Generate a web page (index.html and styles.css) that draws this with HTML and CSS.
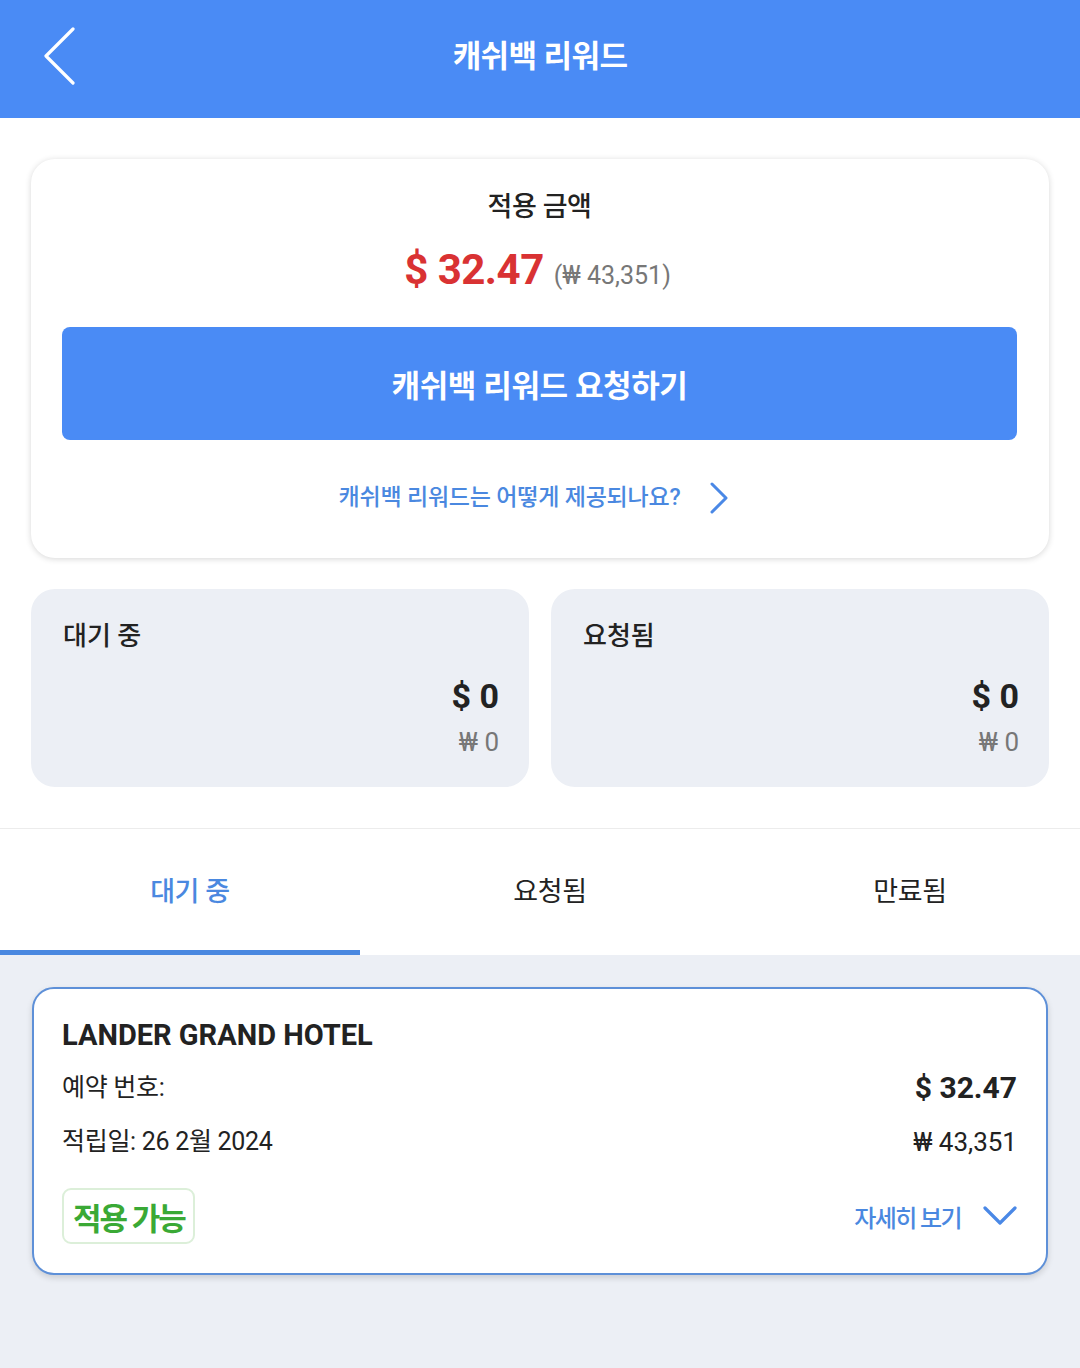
FILE: index.html
```html
<!DOCTYPE html>
<html lang="ko">
<head>
  <meta charset="UTF-8" />
  <meta name="viewport" content="width=device-width, initial-scale=1.0"/>
  <title>캐쉬백 리워드</title>
  <link rel="stylesheet" href="styles.css">
</head>
<body>
  <div class="page">
    <div class="topbar">
      <a class="back" href="#">
        <svg width="34" height="58" viewBox="0 0 34 58"><path d="M31 2 L4 29 L31 56" fill="none" stroke="#fff" stroke-width="3.2" stroke-linecap="round" stroke-linejoin="round"/></svg>
      </a>
      <div class="title">캐쉬백 리워드</div>
    </div>

    <div class="top">
      <div class="summary">
        <div class="summary-label">적용 금액</div>
        <div class="summary-amount">
          <span class="usd">$ 32.47</span>
          <span class="krw">(₩ 43,351)</span>
        </div>
        <button class="request">캐쉬백 리워드 요청하기</button>
        <a class="how" href="#">
          <span>캐쉬백 리워드는 어떻게 제공되나요?</span>
          <svg width="22" height="32" viewBox="0 0 22 32"><path d="M4 2 L18 16 L4 30" fill="none" stroke="#4a88e6" stroke-width="3" stroke-linecap="round" stroke-linejoin="round"/></svg>
        </a>
      </div>

      <div class="stats">
        <div class="stat">
          <div class="stat-title">대기 중</div>
          <div class="stat-usd">$ 0</div>
          <div class="stat-krw">₩ 0</div>
        </div>
        <div class="stat">
          <div class="stat-title">요청됨</div>
          <div class="stat-usd">$ 0</div>
          <div class="stat-krw">₩ 0</div>
        </div>
      </div>
    </div>

    <div class="tabs">
      <div class="tab active">대기 중</div>
      <div class="tab">요청됨</div>
      <div class="tab">만료됨</div>
    </div>

    <div class="list">
      <div class="item">
        <div class="hotel">LANDER GRAND HOTEL</div>
        <div class="row">
          <span class="label">예약 번호:</span>
          <span class="item-usd">$ 32.47</span>
        </div>
        <div class="row row2">
          <span class="label">적립일: 26 2월 2024</span>
          <span class="item-krw">₩ 43,351</span>
        </div>
        <div class="item-foot">
          <span class="badge">적용 가능</span>
          <a class="more" href="#">
            <span>자세히 보기</span>
            <svg width="34" height="22" viewBox="0 0 34 22"><path d="M2 3 L17 18 L32 3" fill="none" stroke="#4a88e6" stroke-width="3.2" stroke-linecap="round" stroke-linejoin="round"/></svg>
          </a>
        </div>
      </div>
    </div>
  </div>
</body>
</html>
```

FILE: styles.css
```css
:root {
  --blue: #4a8bf5;
  --link-blue: #4a88e0;
  --red: #d93233;
  --text: #222222;
  --grey: #777777;
  --panel: #eceff5;
  --green: #3aa935;
}
* {
  box-sizing: border-box;
}
body {
  margin: 0;
  font-family: Roboto, "Noto Sans CJK KR", sans-serif;
  color: var(--text);
  background-color: var(--panel);
}
a {
  text-decoration: none;
}
.page {
  min-height: 100vh;
  display: flex;
  flex-direction: column;
}
.topbar {
  height: 118px;
  background-color: var(--blue);
  display: flex;
  align-items: center;
  justify-content: center;
  position: relative;
}
.back {
  position: absolute;
  left: 42px;
  top: 27px;
}
.title {
  color: white;
  font-size: 31px;
  font-weight: 700;
  letter-spacing: -0.6px;
  margin-top: -12px;
}
.top {
  background-color: white;
  padding: 41px 31px 41px 31px;
  border-bottom: 1px solid #ececec;
}
.summary {
  background-color: white;
  border-radius: 24px;
  box-shadow: 0 1px 6px rgba(0,0,0,0.16);
  padding: 28px 32px 40px 31px;
  display: flex;
  flex-direction: column;
  align-items: center;
}
.summary-label {
  font-size: 27px;
  font-weight: 500;
  line-height: 40px;
  letter-spacing: -0.4px;
}
.summary-amount {
  margin-top: 15px;
  line-height: 56px;
  display: flex;
  align-items: baseline;
  gap: 10px;
  padding-right: 4px;
}
.usd {
  color: var(--red);
  font-size: 42px;
  font-weight: 700;
  letter-spacing: -0.5px;
}
.krw {
  color: var(--grey);
  font-size: 25px;
}
.request {
  margin-top: 23px;
  width: 100%;
  height: 113px;
  border: none;
  border-radius: 8px;
  background-color: var(--blue);
  color: white;
  font-family: inherit;
  font-size: 31px;
  font-weight: 700;
  letter-spacing: -0.4px;
}
.how {
  margin-top: 38px;
  line-height: 40px;
  display: flex;
  align-items: center;
  gap: 28px;
  color: var(--link-blue);
  font-size: 23px;
  font-weight: 500;
  letter-spacing: -0.2px;
  padding-right: 10px;
}
.stats {
  margin-top: 31px;
  display: grid;
  grid-template-columns: 1fr 1fr;
  gap: 22px;
}
.stat {
  background-color: var(--panel);
  border-radius: 24px;
  padding: 27px 30px 27px 32px;
  display: flex;
  flex-direction: column;
}
.stat-title {
  font-size: 26px;
  font-weight: 500;
  line-height: 40px;
  letter-spacing: 0;
}
.stat-usd {
  margin-top: 18px;
  align-self: flex-end;
  font-size: 34px;
  font-weight: 700;
  line-height: 44px;
}
.stat-krw {
  margin-top: 6px;
  align-self: flex-end;
  font-size: 26px;
  color: var(--grey);
  line-height: 36px;
}
.tabs {
  display: grid;
  grid-template-columns: repeat(3, 1fr);
  background-color: white;
  height: 126px;
}
.tab {
  display: flex;
  align-items: center;
  justify-content: center;
  padding-left: 20px;
  font-size: 27px;
  letter-spacing: -0.4px;
  color: var(--text);
  border-bottom: 5px solid transparent;
}
.tab.active {
  color: var(--link-blue);
  font-weight: 500;
  border-bottom-color: var(--link-blue);
}
.list {
  flex: 1;
  background-color: var(--panel);
  padding: 32px 32px 40px 32px;
}
.item {
  background-color: white;
  border: 2px solid #5e90d8;
  border-radius: 22px;
  box-shadow: 0 3px 6px rgba(0,0,0,0.14);
  padding: 26px 29px 29px 28px;
}
.hotel {
  font-size: 29px;
  font-weight: 700;
  line-height: 40px;
  letter-spacing: 0;
}
.row {
  margin-top: 13px;
  display: flex;
  justify-content: space-between;
  align-items: center;
  line-height: 40px;
}
.row2 {
  margin-top: 14px;
}
.label {
  font-size: 25px;
  letter-spacing: -0.3px;
}
.item-usd {
  font-size: 30px;
  font-weight: 700;
}
.item-krw {
  font-size: 26px;
}
.item-foot {
  margin-top: 26px;
  display: flex;
  justify-content: space-between;
  align-items: center;
}
.badge {
  height: 56px;
  display: flex;
  align-items: center;
  padding: 0 8px 0 9px;
  border: 2px solid #dcefd9;
  border-radius: 9px;
  color: var(--green);
  font-size: 31px;
  font-weight: 700;
  letter-spacing: -2px;
}
.more {
  display: flex;
  align-items: center;
  gap: 22px;
  color: var(--link-blue);
  font-size: 24px;
  font-weight: 500;
  letter-spacing: -1.6px;
}
```
